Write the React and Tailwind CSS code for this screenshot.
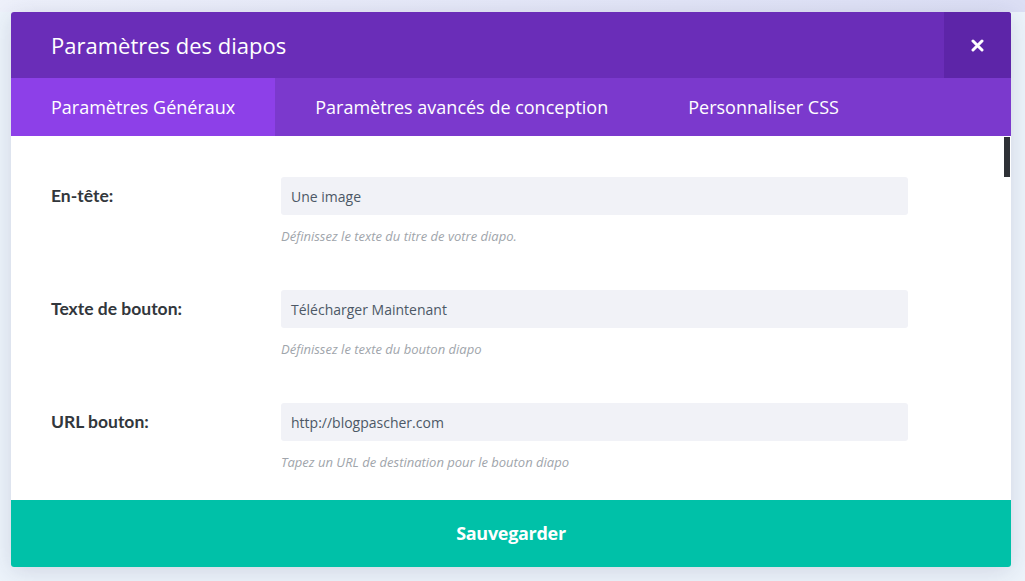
import React from "react";

const fields = [
  { label: "En-tête:", value: "Une image", help: "Définissez le texte du titre de votre diapo." },
  { label: "Texte de bouton:", value: "Télécharger Maintenant", help: "Définissez le texte du bouton diapo" },
  { label: "URL bouton:", value: "http://blogpascher.com", help: "Tapez un URL de destination pour le bouton diapo" },
];

export default function App() {
  return (
    <div className="relative w-[1025px] h-[581px] overflow-hidden bg-[#edf4fb]" style={{ fontFamily: '"Open Sans", sans-serif' }}>
      <div className="h-[12px] bg-gradient-to-r from-[#eef1fb] to-[#dcdff5]"></div>
      <div className="absolute left-[11px] top-[12px] w-[1000px] h-[555px] rounded-[3px] overflow-hidden bg-white shadow-[0_4px_24px_rgba(43,40,90,0.15)] flex flex-col">
        <div className="h-[66px] flex bg-[#6a2db8]">
          <div className="flex-1 flex items-center pl-[40px] text-white text-[22px]">Paramètres des diapos</div>
          <div className="w-[67px] flex items-center justify-center bg-[#5d25a8]">
            <svg width="13" height="13" viewBox="0 0 13 13">
              <path d="M2 2 L11 11 M11 2 L2 11" stroke="white" strokeWidth="3" strokeLinecap="round" />
            </svg>
          </div>
        </div>
        <div className="h-[58px] flex bg-[#7b39cd] text-white text-[18px]">
          <div className="px-[40px] flex items-center bg-[#8d40e8]">Paramètres Généraux</div>
          <div className="px-[40px] flex items-center">Paramètres avancés de conception</div>
          <div className="px-[40px] flex items-center">Personnaliser CSS</div>
        </div>
        <div className="relative flex-1 pt-[41px] pl-[40px] flex flex-col gap-[45px]">
          {fields.map((f) => (
            <div key={f.label} className="flex">
              <div className="w-[230px] h-[38px] flex items-center text-[17.5px] font-bold text-[#32373c]" style={{ fontFamily: 'Lato, sans-serif' }}>
                {f.label}
              </div>
              <div className="w-[627px]">
                <div className="h-[38px] rounded-[3px] bg-[#f1f2f7] flex items-center px-[10px] text-[14px] text-[#4c5866]">
                  {f.value}
                </div>
                <div className="mt-[12px] text-[13px] italic text-[#a0a5ab] leading-[18px]">{f.help}</div>
              </div>
            </div>
          ))}
          <div className="absolute right-[1px] top-[1px] w-[6px] h-[40px] bg-[#2e3136]"></div>
        </div>
        <div className="h-[67px] bg-[#00c1a8] flex items-center justify-center text-white text-[18px] font-bold tracking-[-0.3px]">
          Sauvegarder
        </div>
      </div>
    </div>
  );
}
